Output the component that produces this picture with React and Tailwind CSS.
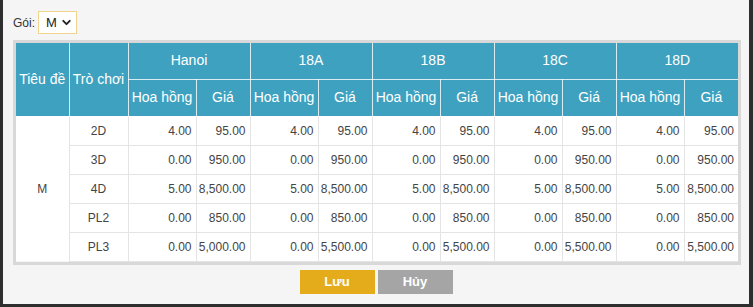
import React from "react";
import { ChevronDown } from "lucide-react";

const regions = ["Hanoi", "18A", "18B", "18C", "18D"];

const games = [
  { name: "2D", rate: "4.00", price: "95.00" },
  { name: "3D", rate: "0.00", price: "950.00" },
  { name: "4D", rate: "5.00", price: "8,500.00" },
  { name: "PL2", rate: "0.00", price: "850.00" },
  { name: "PL3", rate: "0.00", price: "5,000.00", other: "5,500.00" },
];

export default function App() {
  return (
    <div
      className="w-[753px] h-[307px] bg-[#2e2e2e] overflow-hidden"
      style={{ fontFamily: '"Liberation Sans", Arial, sans-serif' }}
    >
      <div className="ml-[3px] w-[746px] h-[304px] bg-[#f5f5f5] pt-[11px] px-[10px]">
        {/* package picker */}
        <div className="flex items-center h-[23px] text-[12px] text-[#333]">
          <span className="mr-[3px]">Gói:</span>
          <div className="flex items-center justify-between w-[39px] h-[23px] bg-white border border-[#f0d48e] pl-[7px] pr-[3px] text-[13px] text-[#222]">
            <span>M</span>
            <ChevronDown className="w-[13px] h-[13px]" strokeWidth={3.5} />
          </div>
        </div>

        <div className="mt-[6px] w-[728px] border-[3px] border-[#d8d8d8]">
          <table className="w-[722px] border-collapse table-fixed">
            <colgroup>
              <col className="w-[53px]" />
              <col className="w-[59px]" />
              {regions.map((r) => (
                <React.Fragment key={r}>
                  <col className="w-[68px]" />
                  <col className="w-[54px]" />
                </React.Fragment>
              ))}
            </colgroup>
            <thead className="bg-[#3ea1bf] text-white text-[14px]">
              <tr className="h-[36px]">
                <th rowSpan={2} className="font-normal border border-white/80 border-t-0 border-l-0 px-0 whitespace-nowrap">
                  Tiêu đề
                </th>
                <th rowSpan={2} className="font-normal border border-white/80 border-t-0 px-0 whitespace-nowrap">
                  Trò chơi
                </th>
                {regions.map((r) => (
                  <th key={r} colSpan={2} className="font-normal border border-white/80 border-t-0 last:border-r-0">
                    {r}
                  </th>
                ))}
              </tr>
              <tr className="h-[37px]">
                {regions.map((r, i) => (
                  <React.Fragment key={r}>
                    <th className="font-normal border border-white/80 px-0 whitespace-nowrap">Hoa hồng</th>
                    <th className={`font-normal border border-white/80 ${i === 4 ? "border-r-0" : ""}`}>Giá</th>
                  </React.Fragment>
                ))}
              </tr>
            </thead>
            <tbody className="bg-white text-[12px] text-[#444]">
              {games.map((g, idx) => (
                <tr key={g.name} className="h-[29px]">
                  {idx === 0 && (
                    <td rowSpan={5} className="text-center border border-[#e4e4e4] border-l-0 border-b-0">
                      M
                    </td>
                  )}
                  <td className="text-center border border-[#e4e4e4]">{g.name}</td>
                  {regions.map((r, i) => (
                    <React.Fragment key={r}>
                      <td className="text-right pr-[4px] border border-[#e4e4e4]">{g.rate}</td>
                      <td className={`text-right pr-[4px] border border-[#e4e4e4] ${i === 4 ? "border-r-0" : ""}`}>
                        {i > 0 && g.other ? g.other : g.price}
                      </td>
                    </React.Fragment>
                  ))}
                </tr>
              ))}
            </tbody>
          </table>
        </div>

        <div className="mt-[5px] flex justify-center gap-[3px]">
          <button className="w-[75px] h-[24px] bg-[#e4ac1b] text-white text-[13px] font-bold">Lưu</button>
          <button className="w-[75px] h-[24px] bg-[#a5a5a5] text-white text-[13px] font-bold">Hủy</button>
        </div>
      </div>
    </div>
  );
}
